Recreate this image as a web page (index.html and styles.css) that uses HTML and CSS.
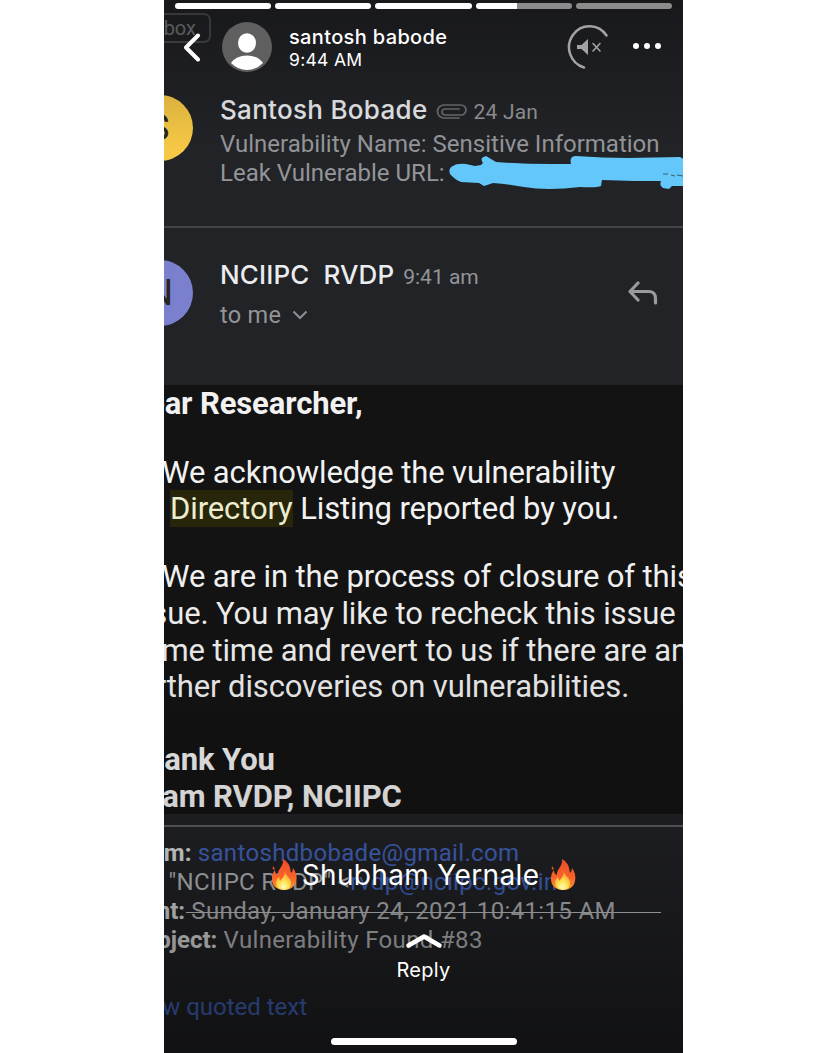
FILE: index.html
```
<!DOCTYPE html>
<html lang="en">
<head>
  <meta charset="UTF-8" />
  <meta name="viewport" content="width=device-width, initial-scale=1.0"/>
  <title>Story - santosh babode</title>
  <link rel="stylesheet" href="styles.css">
</head>
<body>
<div class="phone">

  <div class="mail">
    <div class="subject-row"><span class="chip">Inbox</span></div>
    <div class="message first">
      <div class="avatar yellow">S</div>
      <div class="message-text">
        <div class="sender-row">
          <span class="sender name-one">Santosh Bobade</span>
          <svg class="clip" width="32" height="16" viewBox="0 0 32 16" fill="none" stroke="#6c6e71" stroke-width="1.7" stroke-linecap="round">
            <path d="M23 14H8a6.500 6.500 0 0 1 0-13h17a5 5 0 0 1 0 10H9a3 3 0 0 1 0-6h14"/>
          </svg>
          <span class="time date">24 Jan</span>
        </div>
        <div class="snippet">Vulnerability Name: Sensitive Information</div>
        <div class="snippet">Leak Vulnerable URL:</div>
        <svg class="scribble" width="236" height="36" viewBox="0 0 236 36">
          <path fill="#63c7fa" d="M5 10Q9 7 18 8L27 10 33 9 35 7Q31 2 38 0L48 6Q74 8 103 8L123 8Q121 0 128 0Q155 2 180 2L232 1 236 3V30L224 30 221 33 215 32Q211 30 213 25L186 25 154 24 153 30Q149 32 132 31Q99 35 76 31Q61 28 45 27L36 30 31 27 13 26Q6 23 2 18Q0 12 5 10Z"/>
          <path fill="none" stroke="#39606b" stroke-width="1" d="M215 18l5 0M223 19l4 1M229 19l6 1"/>
        </svg>
      </div>
    </div>
    <div class="message second">
      <div class="avatar purple">N</div>
      <div class="message-text">
        <div class="sender-row">
          <span class="sender name-two">NCIIPC&nbsp; RVDP</span>
          <span class="time hour">9:41 am</span>
        </div>
        <div class="to-row">
          <span>to me</span>
          <svg width="16" height="10" viewBox="0 0 16 10" fill="none" stroke="#8b8d90" stroke-width="2.2"><path d="M1.500 1.500L8 8l6.500-6.500"/></svg>
        </div>
      </div>
      <svg class="reply-icon" width="32" height="26" viewBox="0 0 32 26" fill="none" stroke="#9a9b9d" stroke-width="3.2" stroke-linecap="round" stroke-linejoin="round">
        <path d="M11 2L3 10.500l8 8.500M3 10.500h18.500q7 0 7 7V22"/>
      </svg>
    </div>

    <div class="body">
      <p class="bold"><span>Dear Researcher,</span></p>
      <p class="p2">
        <span class="indent">We acknowledge the vulnerability</span>
        <span class="indent-more"><mark>Directory</mark> Listing reported by you.</span>
      </p>
      <p class="p3">
        <span class="indent">We are in the process of closure of this</span>
        <span>issue. You may like to recheck this issue</span>
        <span>some time and revert to us if there are any</span>
        <span>further discoveries on vulnerabilities.</span>
      </p>
      <p class="bold p4">
        <span>Thank You</span>
        <span>Team RVDP, NCIIPC</span>
      </p>
    </div>

    <div class="quote">
      <div><b>From:</b> <a>santoshdbobade@gmail.com</a></div>
      <div><b>To:</b> "NCIIPC RVDP" &lt;<a>rvdp@nciipc.gov.in</a></div>
      <div><b>Sent:</b> Sunday, January 24, 2021 10:41:15 AM</div>
      <div><b>Subject:</b> Vulnerability Found #83</div>
      <div class="show"><a>Show quoted text</a></div>
    </div>
  </div>

  <div class="story">
    <div class="progress">
      <i class="done"></i><i class="done"></i><i class="done"></i><i class="current"></i><i></i>
    </div>
    <div class="story-head">
      <svg class="back" width="18" height="30" viewBox="0 0 18 30" fill="none" stroke="#fff" stroke-width="4" stroke-linecap="round" stroke-linejoin="round"><path d="M15 2.500L3 14.500l12 12"/></svg>
      <svg class="profile" width="50" height="50" viewBox="0 0 50 50">
        <circle cx="25" cy="25" r="25" fill="#5f5f60"/>
        <ellipse cx="25" cy="21" rx="9" ry="9.800" fill="#fff"/>
        <path fill="#fff" d="M9 41Q14 33.500 25 33.500T41 41Q34 48 25 48T9 41Z"/>
      </svg>
      <div class="who">
        <div class="user">santosh babode</div>
        <div class="posted">9:44 AM</div>
      </div>
      <svg class="mute" width="42" height="46" viewBox="0 0 42 46" fill="none" stroke="#a3a3a4" stroke-linecap="round">
        <path stroke-width="2.500" d="M39.500 11.500A20.500 21 0 1 0 17 43.500"/>
        <path fill="#a3a3a4" stroke="none" d="M10 21h4.500l6.500-6v16l-6.500-6H10z"/>
        <path stroke-width="1.600" d="M26 19.500l7 7.500M33 19.500l-7 7.500"/>
      </svg>
      <div class="dots"><i></i><i></i><i></i></div>
    </div>

    <div class="caption">
      <svg class="fire" width="26" height="32" viewBox="0 0 26 32">
        <defs>
          <linearGradient id="flame" x1="0" y1="0" x2="0" y2="1"><stop offset="0" stop-color="#ee4a26"/><stop offset=".6" stop-color="#f7642a"/><stop offset="1" stop-color="#fb9a30"/></linearGradient>
          <radialGradient id="core" cx=".5" cy=".85" r=".8"><stop offset="0" stop-color="#fffbc0"/><stop offset=".4" stop-color="#fee34e"/><stop offset="1" stop-color="#fb8c2c"/></radialGradient>
        </defs>
        <path fill="url(#flame)" d="M12 0C20 5 19 10 20 14Q22 12 22 9C25 13 26 17 25 22C24 28 19 31 13 31C6 31 1 27 1 20C1 16 2 13 4 11Q4 15 7 16C6 10 13 8 12 0ZM2 7L4 10Q1 12 2 7Z"/>
        <path fill="url(#core)" d="M14 11C14 17 19 18 20 23Q21 30 13 31Q5 30 5 24Q5 20 8 18L9 22C12 19 14 16 14 11Z"/>
      </svg>
      <span>Shubham Yernale</span>
      <svg class="fire" width="26" height="32" viewBox="0 0 26 32">
        <path fill="url(#flame)" d="M12 0C20 5 19 10 20 14Q22 12 22 9C25 13 26 17 25 22C24 28 19 31 13 31C6 31 1 27 1 20C1 16 2 13 4 11Q4 15 7 16C6 10 13 8 12 0ZM2 7L4 10Q1 12 2 7Z"/>
        <path fill="url(#core)" d="M14 11C14 17 19 18 20 23Q21 30 13 31Q5 30 5 24Q5 20 8 18L9 22C12 19 14 16 14 11Z"/>
      </svg>
    </div>
    <div class="divider"></div>
    <svg class="up" width="38" height="16" viewBox="0 0 38 16" fill="none" stroke="#fff" stroke-width="4.500" stroke-linecap="round" stroke-linejoin="round"><path d="M3.500 12.500L19 3.500l15.500 9"/></svg>
    <div class="reply">Reply</div>
    <div class="home-bar"></div>
  </div>
</div>
</body>
</html>
```
FILE: styles.css
```
* { box-sizing: border-box; margin: 0; padding: 0; }
body {
  font-family: Roboto, "Liberation Sans", sans-serif;
  background: #fff;
}

.phone {
  position: relative;
  width: 519px;
  height: 1053px;
  margin-left: 164px;
  background: #222327;
  overflow: hidden;
  white-space: nowrap;
}

/* mail screenshot behind the story */
.mail {
  height: 1053px;
  color: #939598;
}

.subject-row {
  height: 95px;
  padding-top: 13px;
}

.chip {
  display: block;
  width: 86px;
  height: 30px;
  margin-left: -39px;
  padding-right: 13px;
  border: 2px solid #4a4b4e;
  border-radius: 7px;
  font-size: 20px;
  line-height: 27px;
  text-align: right;
  color: #77787b;
}

.message {
  display: flex;
}

.first {
  height: 133px;
  border-bottom: 2px solid #434447;
}

.second {
  height: 157px;
  padding-top: 32px;
}

.avatar {
  flex: none;
  width: 66px;
  height: 66px;
  margin-left: -37px;
  padding-right: 3px;
  border-radius: 50%;
  font-size: 37px;
  line-height: 66px;
  text-align: center;
  color: #292521;
}

.yellow { background: #f6c846; }

.purple {
  padding-right: 0;
  background: #7b80ce;
}

.message-text {
  width: 444px;
  margin-left: 27px;
}

.sender-row {
  display: flex;
  align-items: baseline;
  height: 35px;
}

.sender {
  font-family: Inter, Roboto, sans-serif;
  font-weight: 500;
  font-size: 26px;
  line-height: 30px;
  color: #ebecef;
}

.name-one { letter-spacing: .3px; }
.name-two { letter-spacing: .12px; }

.clip {
  align-self: flex-start;
  margin: 9px 6px 0 8px;
}

.time {
  font-size: 21px;
}

.date { letter-spacing: .2px; }
.hour { margin-left: 9px; }

.snippet {
  font-size: 24px;
  line-height: 28.5px;
}

.scribble {
  display: block;
  margin: -31px 0 0 228px;
}

.to-row {
  display: flex;
  align-items: center;
  gap: 11px;
  margin-top: 6px;
  font-size: 23.5px;
  letter-spacing: .3px;
  line-height: 28px;
}

.reply-icon {
  flex: none;
  margin: 21px 0 0 -37px;
}

.body {
  height: 429px;
  padding-top: 1px;
  background: #131313;
  color: #f2f2f2;
  font-size: 31px;
  letter-spacing: -.12px;
  line-height: 36.7px;
}

.body span {
  display: block;
  margin-left: -36px;
}

.body .indent { margin-left: -2px; }
.body .indent-more { margin-left: 6px; }
.bold { font-weight: bold; }
.p2 { padding-top: 32px; }
.p3 { padding-top: 31px; }
.p4 { padding-top: 36px; }

mark {
  background: #27260a;
  color: #eeecce;
}

.quote {
  position: relative;
  height: 239px;
  margin-left: -35px;
  padding-top: 25px;
  font-size: 24px;
  letter-spacing: .34px;
  line-height: 29px;
  color: #bcbdbf;
}

/* rule between the mail body and the quoted header */
.quote::before {
  content: "";
  position: absolute;
  top: 11px;
  left: 0;
  right: 0;
  height: 2px;
  background: #5f6064;
}

.quote b {
  letter-spacing: 0;
  color: #e4e4e5;
}

.quote a { color: #4568c4; }

.quote .show {
  margin: 38px 0 0 -8px;
  letter-spacing: 0;
}

/* story controls on top */
.story {
  position: absolute;
  inset: 0;
  display: flex;
  flex-direction: column;
  align-items: center;
  font-family: Inter, Roboto, sans-serif;
  color: #fff;
  background: linear-gradient(rgba(0,0,0,.3), rgba(0,0,0,0) 150px, rgba(0,0,0,0) 560px, rgba(0,0,0,.13) 800px, rgba(0,0,0,.5) 1053px);
}

.progress {
  display: flex;
  gap: 4px;
  width: 497px;
  margin-top: 3px;
}

.progress i {
  flex: 1;
  height: 6px;
  border-radius: 3px;
  background: #8b8b8c;
}

.progress .done { background: #fff; }
.progress .current { background: linear-gradient(90deg, #fff 43%, #8b8b8c 43%); }

.story-head {
  display: flex;
  width: 100%;
  height: 60px;
  padding: 13px 22px 0 19px;
}

.back { margin-top: 11px; }
.profile { margin-left: 21px; }

.who {
  flex: 1;
  margin-left: 17px;
}

.user {
  margin-top: 3px;
  font-weight: 500;
  font-size: 20px;
  letter-spacing: .35px;
  line-height: 24px;
}

.posted {
  font-size: 17.5px;
  letter-spacing: .3px;
  line-height: 22px;
}

.mute { margin-top: 2px; }

.dots {
  display: flex;
  gap: 5px;
  margin: 21px 0 0 24px;
}

.dots i {
  width: 6px;
  height: 6px;
  border-radius: 50%;
  background: #fff;
}

.caption {
  display: flex;
  align-items: center;
  gap: 5px;
  height: 32px;
  margin-top: 790px;
  font-size: 28px;
  letter-spacing: .35px;
}

.caption span + .fire { margin-left: 6px; }

.divider {
  width: 475px;
  height: 1px;
  margin-top: 21px;
  background: #8f8f90;
}

.up { margin-top: 20px; }

.reply {
  margin-top: 7px;
  font-size: 20px;
  letter-spacing: .3px;
  line-height: 28px;
}

.home-bar {
  width: 186px;
  height: 7px;
  margin-top: 54px;
  border-radius: 4px;
  background: #fff;
}
```
